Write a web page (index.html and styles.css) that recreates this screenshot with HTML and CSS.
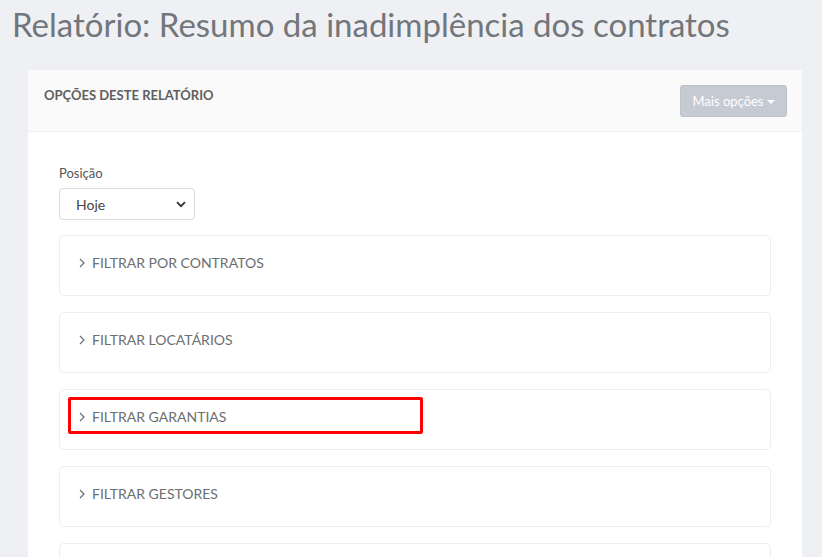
FILE: index.html
```html
<!DOCTYPE html>
<html lang="pt-BR">
<head>
<meta charset="utf-8">
<title>Relatório</title>
<link rel="stylesheet" href="styles.css">
</head>
<body>
<h1 class="page-title">Relatório: Resumo da inadimplência dos contratos</h1>
<div class="card">
  <div class="card-header">
    <span class="card-title">OPÇÕES DESTE RELATÓRIO</span>
    <button class="btn-more">Mais opções <span class="caret"></span></button>
  </div>
  <div class="card-body">
    <label class="field-label">Posição</label>
    <div class="select">
      <span>Hoje</span>
      <svg width="10" height="7" viewBox="0 0 10 7"><path d="M1 1.2 L5 5.2 L9 1.2" fill="none" stroke="#333" stroke-width="1.8"/></svg>
    </div>
    <div class="panel"><div class="panel-heading"><svg class="chev" width="6" height="10" viewBox="0 0 6 10"><path d="M1 1 L5 5 L1 9" fill="none" stroke="#6b6e72" stroke-width="1.2"/></svg>FILTRAR POR CONTRATOS</div></div>
    <div class="panel"><div class="panel-heading"><svg class="chev" width="6" height="10" viewBox="0 0 6 10"><path d="M1 1 L5 5 L1 9" fill="none" stroke="#6b6e72" stroke-width="1.2"/></svg>FILTRAR LOCATÁRIOS</div></div>
    <div class="panel"><div class="panel-heading highlight"><svg class="chev" width="6" height="10" viewBox="0 0 6 10"><path d="M1 1 L5 5 L1 9" fill="none" stroke="#6b6e72" stroke-width="1.2"/></svg>FILTRAR GARANTIAS</div></div>
    <div class="panel"><div class="panel-heading"><svg class="chev" width="6" height="10" viewBox="0 0 6 10"><path d="M1 1 L5 5 L1 9" fill="none" stroke="#6b6e72" stroke-width="1.2"/></svg>FILTRAR GESTORES</div></div>
    <div class="panel"></div>
  </div>
</div>
</body>
</html>
```

FILE: styles.css
```css
html, body {
  margin: 0;
  padding: 0;
  background: #eff0f3;
  font-family: Lato, "Open Sans", sans-serif;
  overflow: hidden;
  height: 557px;
}
.page-title {
  margin: 0;
  padding: 4px 0 0 12px;
  font-size: 33px;
  font-weight: 400;
  color: #72767b;
  line-height: 40px;
  height: 66px;
}
.card {
  margin: 0 20px 0 28px;
  background: #fff;
}
.card-header {
  background: #fafafa;
  border-bottom: 1px solid #eef0f3;
  height: 61px;
  display: flex;
  justify-content: space-between;
  align-items: flex-start;
  padding: 0 15px 0 16px;
}
.card-title {
  font-size: 13px;
  font-weight: 700;
  color: #5f5f5f;
  margin-top: 17px;
}
.btn-more {
  margin-top: 15px;
  background: #c5cad3;
  border: 1px solid #bcc1ca;
  border-radius: 3px;
  color: #fff;
  font-family: Lato, sans-serif;
  font-size: 13px;
  height: 32px;
  width: 107px;
  padding: 0;
  display: flex;
  align-items: center;
  justify-content: center;
  gap: 3px;
}
.caret {
  width: 0; height: 0;
  border-left: 4px solid transparent;
  border-right: 4px solid transparent;
  border-top: 4px solid #fff;
  margin-top: 1px;
}
.card-body {
  padding: 33px 31px 0 31px;
}
.field-label {
  display: block;
  font-size: 13px;
  color: #555;
  line-height: 16px;
  margin-bottom: 7px;
}
.select {
  width: 136px;
  height: 32px;
  border: 1px solid #d9dbe0;
  border-radius: 4px;
  display: flex;
  align-items: center;
  justify-content: space-between;
  padding: 0 8px 0 16px;
  box-sizing: border-box;
  font-size: 14px;
  color: #444;
  margin-bottom: 15px;
}
.panel {
  border: 1px solid #eceef2;
  border-radius: 5px;
  height: 61px;
  box-sizing: border-box;
  padding: 7px 0 0 8px;
  margin-bottom: 16px;
}
.panel-heading {
  width: 355px;
  height: 37px;
  box-sizing: border-box;
  border: 3px solid transparent;
  border-radius: 2px;
  display: flex;
  align-items: center;
  padding: 2px 0 0 8px;
  font-size: 14px;
  color: #6b6e72;
}
.panel-heading.highlight {
  border-color: #ff0000;
}
.chev {
  margin-right: 7px;
  flex: none;
}
```
